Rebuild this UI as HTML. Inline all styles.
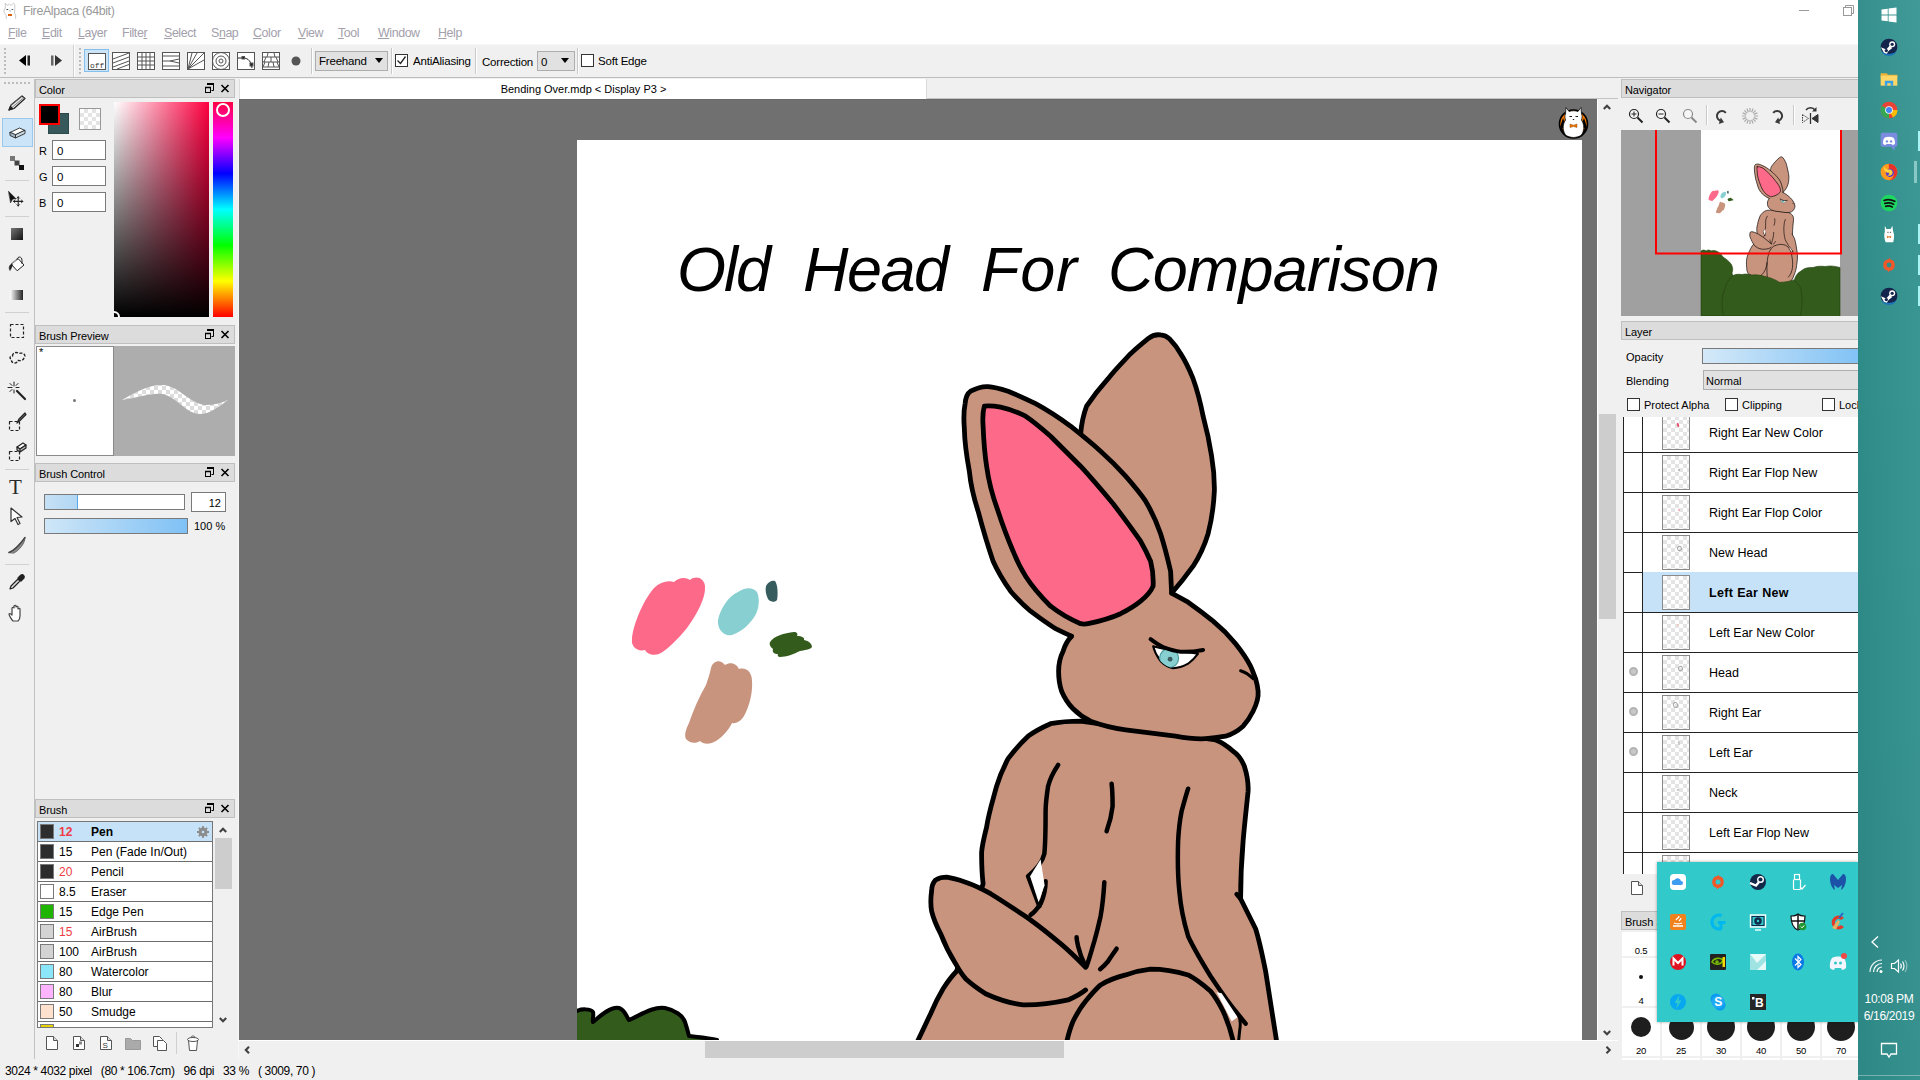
<!DOCTYPE html>
<html lang="en">
<head>
<meta charset="utf-8">
<title>FireAlpaca (64bit)</title>
<style>
*{box-sizing:border-box;margin:0;padding:0}
html,body{width:1920px;height:1080px;overflow:hidden;background:#f0f0f0;font-family:"Liberation Sans",sans-serif;font-size:12px;color:#000}
.a{position:absolute}
#app{position:absolute;left:0;top:0;width:1858px;height:1080px;background:#f0f0f0;overflow:hidden}
.ptitle{position:absolute;height:19px;background:#dcdcdc;border:1px solid #bfbfbf;font-size:11px;letter-spacing:-.1px;line-height:18px;padding-top:1px;padding-left:3px;white-space:nowrap;overflow:hidden}
.ptitle svg{position:absolute;top:0;right:0}
.inp{position:absolute;background:#fff;border:1px solid #7a7a7a;font-size:11.500px;line-height:21px;padding-left:4px;overflow:hidden}
.cb{position:absolute;width:13px;height:13px;background:#fff;border:1px solid #333}
.t{position:absolute;white-space:nowrap;line-height:14px}
.vsep{position:absolute;width:1px;background:#c9c9c9;border-right:1px solid #fff;box-sizing:content-box}
.checker{background-color:#fff;background-image:linear-gradient(45deg,#e4e4e4 25%,transparent 25%,transparent 75%,#e4e4e4 75%),linear-gradient(45deg,#e4e4e4 25%,transparent 25%,transparent 75%,#e4e4e4 75%);background-size:8px 8px;background-position:0 0,4px 4px}
</style>
</head>
<body>
<div id="app">
<!-- title bar + menu bar -->
<div class="a" style="left:0;top:0;width:1858px;height:44px;background:#fff"></div>
<svg class="a" style="left:0;top:0" width="20" height="21" viewBox="0 0 20 21"><path d="M6.400 18.800L6 14.800 4.100 12.600V9.400L5.200 8.800 5.300 3.100 7.200 5.500 9.400 4.200 11 5.500 13.500 3.100 14.800 4.700V8.800L14.500 13.200 15.700 14.800 15.600 18.800" fill="#fff" stroke="#c4c4c4" stroke-width=".9" stroke-linejoin="round"/><ellipse cx="7.300" cy="9.500" rx="1" ry=".6" fill="#333"/><ellipse cx="12.400" cy="9.500" rx="1" ry=".6" fill="#555"/><path d="M9.300 10.200l1.400 0-.5 2z" fill="#999"/><rect x="8" y="14" width="4" height="2" fill="#d9600f"/></svg>
<div class="t" style="left:23px;top:4px;font-size:12.400px;letter-spacing:-.35px;color:#9a9a9a">FireAlpaca (64bit)</div>
<div class="a" style="left:1799px;top:10px;width:10px;height:1px;background:#999"></div>
<svg class="a" style="left:1843px;top:4px" width="12" height="12" viewBox="0 0 12 12" fill="none" stroke="#999" stroke-width="1"><rect x=".5" y="3.5" width="8" height="8"/><path d="M2.5 3.5v-2h8v8h-2"/></svg>
<div id="menu" style="position:absolute;left:0;top:26px;height:16px;font-size:12.400px;letter-spacing:-.4px;color:#a3a0ab;line-height:14px">
<span class="t" style="left:8px"><u>F</u>ile</span>
<span class="t" style="left:42px"><u>E</u>dit</span>
<span class="t" style="left:78px"><u>L</u>ayer</span>
<span class="t" style="left:122px">Filte<u>r</u></span>
<span class="t" style="left:164px"><u>S</u>elect</span>
<span class="t" style="left:211px">S<u>n</u>ap</span>
<span class="t" style="left:253px"><u>C</u>olor</span>
<span class="t" style="left:298px"><u>V</u>iew</span>
<span class="t" style="left:338px"><u>T</u>ool</span>
<span class="t" style="left:378px"><u>W</u>indow</span>
<span class="t" style="left:438px"><u>H</u>elp</span>
</div>
<!-- toolbar -->
<div class="a" style="left:0;top:44px;width:1858px;height:34px;background:#f0f0f0;border-top:1px solid #f7f7f7;border-bottom:1px solid #bdbdbd"></div>
<div class="a" style="left:4px;top:48px;width:2px;height:26px;background:repeating-linear-gradient(#bcbcbc 0 2px,transparent 2px 4px)"></div>
<svg class="a" style="left:18px;top:54px" width="46" height="14" viewBox="0 0 46 14"><path d="M1 6.5L8 1v11z" fill="#000"/><rect x="9.5" y="1.5" width="2.5" height="10" fill="#222"/><rect x="33" y="1.5" width="2.5" height="10" fill="#666"/><path d="M44 6.5L37 1v11z" fill="#333"/></svg>
<div class="a" style="left:73px;top:45px;width:1px;height:32px;background:#d0d0d0"></div>
<div class="a" style="left:74px;top:45px;width:1px;height:32px;background:#fff"></div>
<div class="a" style="left:79px;top:48px;width:2px;height:26px;background:repeating-linear-gradient(#bcbcbc 0 2px,transparent 2px 4px)"></div>
<div class="a" style="left:84px;top:49px;width:25px;height:23px;background:#cce4f7;border:1px solid #84bfee"></div>
<svg class="a" style="left:84px;top:49px" width="220" height="24" viewBox="0 0 220 24" fill="none" stroke="#555" stroke-width="1">
<rect x="4.5" y="4.5" width="17" height="16" fill="#fff"/>
<text x="6" y="19" font-family="Liberation Mono, monospace" font-size="8" fill="#333" stroke="none">off</text>
<g><rect x="28.5" y="3.5" width="17" height="17" fill="#fff"/><path d="M29 10l16-6M29 14l16-6M29 18l16-6M33 20l12-4.500"/></g>
<g><rect x="53.500" y="3.500" width="17" height="17" fill="#fff"/><path d="M58 4v16M62 4v16M66 4v16M54 8h16M54 12h16M54 16h16"/></g>
<g><rect x="78.500" y="3.500" width="17" height="17" fill="#fff"/><path d="M79 7h16M79 12h7l9-2M86 12l9 2M79 17h16"/></g>
<g><rect x="103.500" y="3.500" width="17" height="17" fill="#fff"/><path d="M104 20L120 4M104 20l9-16M104 20l4-16M104 20l16-9"/></g>
<g><rect x="128.500" y="3.500" width="17" height="17" fill="#fff"/><circle cx="137" cy="12" r="2"/><circle cx="137" cy="12" r="5"/><circle cx="137" cy="12" r="8.500"/></g>
<g><rect x="153.500" y="3.500" width="17" height="17" fill="#fff"/><path d="M154 9h5c6 0 8 4 9 10" stroke="#222"/><rect x="158" y="7.500" width="2.500" height="2.500" fill="#222"/><rect x="166" y="14" width="3" height="3" fill="#222"/></g>
<g><rect x="178.500" y="3.500" width="17" height="17" fill="#fff"/><path d="M179 8h16M178 13h18M178 18h18M184 4l-1 4M190 4l1 4M182 8l-2 5M187 8v5M192 8l2 5M181 13l-2 5M185 13l-1 5M189 13l1 5M193 13l2 5"/></g>
<circle cx="212" cy="12" r="4.500" fill="#555" stroke="none"/>
</svg>
<div class="vsep" style="left:311px;top:48px;height:26px"></div>
<div class="a" style="left:315px;top:51px;width:73px;height:20px;background:#e1e1e1;border:1px solid #adadad"></div>
<div class="t" style="left:319px;top:54px;font-size:11.500px;letter-spacing:-.2px">Freehand</div>
<svg class="a" style="left:375px;top:58px" width="8" height="5"><path d="M0 0h8L4 5z" fill="#000"/></svg>
<div class="vsep" style="left:391px;top:48px;height:26px"></div>
<div class="cb" style="left:395px;top:54px"></div>
<svg class="a" style="left:396px;top:55px" width="11" height="11" viewBox="0 0 11 11"><path d="M1.500 5.500l3 3 5-7" fill="none" stroke="#222" stroke-width="1.300"/></svg>
<div class="t" style="left:413px;top:54px;font-size:11.5px;letter-spacing:-.2px">AntiAliasing</div>
<div class="vsep" style="left:475px;top:48px;height:26px"></div>
<div class="t" style="left:482px;top:55px;font-size:11.5px;letter-spacing:-.2px">Correction</div>
<div class="a" style="left:537px;top:51px;width:38px;height:20px;background:#e1e1e1;border:1px solid #adadad"></div>
<div class="t" style="left:541px;top:55px;font-size:11.500px">0</div>
<svg class="a" style="left:561px;top:58px" width="8" height="5"><path d="M0 0h8L4 5z" fill="#000"/></svg>
<div class="vsep" style="left:577px;top:48px;height:26px"></div>
<div class="cb" style="left:581px;top:54px"></div>
<div class="t" style="left:598px;top:54px;font-size:11.500px;letter-spacing:-.2px">Soft Edge</div>
<!-- left tool column -->
<div class="a" style="left:34px;top:79px;width:1px;height:980px;background:#c2c2c2"></div>
<div class="a" style="left:4px;top:82px;width:26px;height:2px;background:repeating-linear-gradient(90deg,#bcbcbc 0 2px,transparent 2px 4px)"></div>
<div class="a" style="left:2px;top:118px;width:31px;height:29px;background:#cce4f7;border:1px solid #99c9ef"></div>
<div class="a" style="left:5px;top:180px;width:24px;height:1px;background:#d0d0d0"></div>
<div class="a" style="left:5px;top:216px;width:24px;height:1px;background:#d0d0d0"></div>
<div class="a" style="left:5px;top:312px;width:24px;height:1px;background:#d0d0d0"></div>
<div class="a" style="left:5px;top:469px;width:24px;height:1px;background:#d0d0d0"></div>
<div class="a" style="left:5px;top:564px;width:24px;height:1px;background:#d0d0d0"></div>
<svg class="a" style="left:5px;top:91px" width="24" height="24" viewBox="0 0 24 24" fill="none" stroke="#222" stroke-width="1.200" stroke-linecap="round" stroke-linejoin="round"><path d="M4 19l2-5L17 5l3 2.500L9 17.500z" fill="#e8e8e8" stroke="#222"/><path d="M6 14l11-9M7.500 16l11-9" stroke="#666" stroke-width=".8"/><path d="M4 19l1.500-3.500 2.200 2.200z" fill="#222"/></svg>
<svg class="a" style="left:5px;top:121px" width="24" height="24" viewBox="0 0 24 24" fill="none" stroke="#222" stroke-width="1.200" stroke-linecap="round" stroke-linejoin="round"><g stroke="#2a2a2a" stroke-width=".9"><path d="M5 11.500l9.500-4.500 5.500 2.500-9.500 4.500z" fill="#fff"/><path d="M5 11.500v3l5.500 2.500v-3z" fill="#9fb4c4"/><path d="M10.500 14v3l9.500-4.500v-3z" fill="#c9d6e0"/></g></svg>
<svg class="a" style="left:5px;top:151px" width="24" height="24" viewBox="0 0 24 24" fill="none" stroke="#222" stroke-width="1.200" stroke-linecap="round" stroke-linejoin="round"><rect x="5" y="5" width="5" height="5" fill="#777" stroke="none"/><rect x="9.500" y="9.500" width="5" height="5" fill="#444" stroke="none"/><rect x="14" y="14" width="5" height="5" fill="#111" stroke="none"/></svg>
<svg class="a" style="left:5px;top:187px" width="24" height="24" viewBox="0 0 24 24" fill="none" stroke="#222" stroke-width="1.200" stroke-linecap="round" stroke-linejoin="round"><path d="M3.700 4.500l7.300 7.300-3.300.2-2 3.500z" fill="#111" stroke="#111" stroke-width=".6"/><path d="M13.200 9.800v9.200M8.600 14.400h9.200" stroke-width="1.100"/><path d="M11.900 11.200l1.300-1.400 1.300 1.400M11.900 17.600l1.300 1.400 1.300-1.400M10 13.100l-1.400 1.300 1.400 1.300M16.400 13.100l1.400 1.300-1.400 1.300" stroke-width=".9"/></svg>
<svg class="a" style="left:5px;top:222px" width="24" height="24" viewBox="0 0 24 24" fill="none" stroke="#222" stroke-width="1.200" stroke-linecap="round" stroke-linejoin="round"><defs><linearGradient id="g1" x1="0" y1="0" x2="1" y2="1"><stop offset="0" stop-color="#777"/><stop offset="1" stop-color="#111"/></linearGradient></defs><rect x="6" y="6" width="12" height="12" fill="url(#g1)" stroke="none"/></svg>
<svg class="a" style="left:5px;top:252px" width="24" height="24" viewBox="0 0 24 24" fill="none" stroke="#222" stroke-width="1.200" stroke-linecap="round" stroke-linejoin="round"><path d="M6.500 12l6.500-5.500 6 6.500-6.500 5.500z" fill="#fff" stroke-width="1"/><path d="M7 11.500l6-5" stroke="#999" stroke-width="1.600"/><path d="M6.500 12c-2.500 1.500-3 4.500-1.500 6.500 1-1.500 1.500-3 2.500-5.500z" fill="#222" stroke-width=".6"/><path d="M12 7.500c.5-3.500 5-3.500 5 1v3" stroke-width="1"/></svg>
<svg class="a" style="left:5px;top:283px" width="24" height="24" viewBox="0 0 24 24" fill="none" stroke="#222" stroke-width="1.200" stroke-linecap="round" stroke-linejoin="round"><defs><linearGradient id="g2" x1="0" y1="0" x2="1" y2="0"><stop offset="0" stop-color="#fff"/><stop offset="1" stop-color="#222"/></linearGradient></defs><rect x="5" y="7" width="13" height="10" fill="url(#g2)" stroke="none"/></svg>
<svg class="a" style="left:5px;top:319px" width="24" height="24" viewBox="0 0 24 24" fill="none" stroke="#222" stroke-width="1.200" stroke-linecap="round" stroke-linejoin="round"><rect x="5.500" y="5.500" width="13" height="13" stroke-dasharray="3 2" stroke-linecap="butt"/></svg>
<svg class="a" style="left:5px;top:348px" width="24" height="24" viewBox="0 0 24 24" fill="none" stroke="#222" stroke-width="1.200" stroke-linecap="round" stroke-linejoin="round"><path d="M7.500 8c0-3.500 4-4.500 6.500-2.500 4.500-1.500 7.500 2 5 4.500-1 3.500-5 2.500-6.500 2.500-.500 4-7 3-6-1-2.500-1.500-1.500-3.500 1-3.500z" stroke-dasharray="3 1.500" stroke-linecap="butt" stroke-width="1.400"/></svg>
<svg class="a" style="left:5px;top:379px" width="24" height="24" viewBox="0 0 24 24" fill="none" stroke="#222" stroke-width="1.200" stroke-linecap="round" stroke-linejoin="round"><path d="M12 12l8 8" stroke-width="2.200"/><path d="M9 3v4M9 11v3M3 8.500h4M11 8.500h3M5 4.500l2 2M13 4.500l-2 2M5 12.500l2-2" stroke-width="1"/></svg>
<svg class="a" style="left:5px;top:410px" width="24" height="24" viewBox="0 0 24 24" fill="none" stroke="#222" stroke-width="1.200" stroke-linecap="round" stroke-linejoin="round"><rect x="4.500" y="11.500" width="10" height="9" stroke-dasharray="3 2" stroke-linecap="butt"/><path d="M12 13l2-4 6-6 1 1.500-6 6z" fill="#888"/></svg>
<svg class="a" style="left:5px;top:440px" width="24" height="24" viewBox="0 0 24 24" fill="none" stroke="#222" stroke-width="1.200" stroke-linecap="round" stroke-linejoin="round"><rect x="4.500" y="11.500" width="10" height="9" stroke-dasharray="3 2" stroke-linecap="butt"/><path d="M12 7l6-4 3 2-6 4z" fill="#fff"/><path d="M12 7v3l3 2v-3zM15 9v3l6-4V5z" fill="#bbb"/></svg>
<div class="t" style="left:9px;top:476px;font-family:'Liberation Serif',serif;font-size:21px;line-height:22px;color:#2a2a2a">T</div>
<svg class="a" style="left:5px;top:504px" width="24" height="24" viewBox="0 0 24 24" fill="none" stroke="#222" stroke-width="1.200" stroke-linecap="round" stroke-linejoin="round"><path d="M6 4l11 9-5 .500 3 6-2 1-3-6-4 3z" fill="#fff" stroke="#333"/></svg>
<svg class="a" style="left:5px;top:533px" width="24" height="24" viewBox="0 0 24 24" fill="none" stroke="#222" stroke-width="1.200" stroke-linecap="round" stroke-linejoin="round"><path d="M4 19.500c5-2 11-8 16-15 0 6-6 13-11 15.500z" fill="#8a8a8a" stroke="#555" stroke-width=".8"/><path d="M4 19.500c5-2 11-8 16-15" stroke="#444" stroke-width="1.400"/></svg>
<svg class="a" style="left:5px;top:570px" width="24" height="24" viewBox="0 0 24 24" fill="none" stroke="#222" stroke-width="1.200" stroke-linecap="round" stroke-linejoin="round"><path d="M5 19l1-3 7-7 2 2-7 7z" fill="#ddd"/><path d="M13 8l3 3 3-3c1-2-1-4-3-3z" fill="#222"/></svg>
<svg class="a" style="left:5px;top:601px" width="24" height="24" viewBox="0 0 24 24" fill="none" stroke="#222" stroke-width="1.200" stroke-linecap="round" stroke-linejoin="round"><path d="M8 20c-2-2-4-6-4-7 1-1 2 0 3 1V7c1-1 2-1 2 0v-2c1-1 2-1 2 0v1c1-1 2-1 2 0v2c1-1 2-1 2 0v7c0 3-1 4-2 5z" fill="#fff" stroke="#444"/></svg>
<!-- color panel -->
<div class="ptitle" style="left:35px;top:79px;width:200px">Color<svg width="30" height="17" viewBox="0 0 30 17" fill="none" stroke="#000"><path d="M3.500 4.500h6v6h-2" stroke-width="1"/><path d="M3 4h7" stroke-width="2"/><rect x="1.500" y="7.500" width="5" height="5" fill="#dcdcdc"/><path d="M1 7.500h6" stroke-width="1.500"/><path d="M17.500 5l7 7M24.500 5l-7 7" stroke-width="1.600"/></svg></div>
<div class="a" style="left:48px;top:113px;width:21px;height:21px;background:#37595c;border:1px solid #2c4a4d"></div>
<div class="a" style="left:39px;top:104px;width:21px;height:21px;background:#000;border:2px solid #f00"></div>
<div class="a checker" style="left:79px;top:108px;width:22px;height:22px;border:1px solid #999"></div>
<div class="t" style="left:39px;top:144px;font-size:11px">R</div>
<div class="inp" style="left:52px;top:140px;width:54px;height:20px">0</div>
<div class="t" style="left:39px;top:170px;font-size:11px">G</div>
<div class="inp" style="left:52px;top:166px;width:54px;height:20px">0</div>
<div class="t" style="left:39px;top:196px;font-size:11px">B</div>
<div class="inp" style="left:52px;top:192px;width:54px;height:20px">0</div>
<div class="a" style="left:114px;top:102px;width:95px;height:215px;background:linear-gradient(to top,#000,rgba(0,0,0,0)),linear-gradient(to right,#fff,#ff0040);overflow:hidden"><div class="a" style="left:-6px;top:209px;width:12px;height:12px;border:2px solid #fff;border-radius:50%"></div></div>
<div class="a" style="left:213px;top:102px;width:20px;height:215px;background:linear-gradient(to bottom,#ff0040 0%,#ff00ff 16.600%,#0000ff 33.300%,#00ffff 50%,#00ff00 66.600%,#ffff00 83.300%,#ff0000 100%)"></div>
<div class="a" style="left:216px;top:103px;width:14px;height:14px;border:2px solid #fff;border-radius:50%"></div>
<!-- brush preview -->
<div class="ptitle" style="left:35px;top:325px;width:200px">Brush Preview<svg width="30" height="17" viewBox="0 0 30 17" fill="none" stroke="#000"><path d="M3.500 4.500h6v6h-2" stroke-width="1"/><path d="M3 4h7" stroke-width="2"/><rect x="1.500" y="7.500" width="5" height="5" fill="#dcdcdc"/><path d="M1 7.500h6" stroke-width="1.500"/><path d="M17.500 5l7 7M24.500 5l-7 7" stroke-width="1.600"/></svg></div>
<div class="a" style="left:36px;top:346px;width:78px;height:110px;background:#fff;border:1px solid #8a8a8a"></div>
<div class="t" style="left:39px;top:345px;font-size:11px">*</div>
<div class="a" style="left:73px;top:399px;width:3px;height:3px;border-radius:50%;background:#777"></div>
<div class="a" style="left:114px;top:346px;width:121px;height:110px;background:#adadad"></div>
<svg class="a" style="left:114px;top:346px" width="121" height="110" viewBox="0 0 121 110"><defs><pattern id="ck" width="8" height="8" patternUnits="userSpaceOnUse"><rect width="8" height="8" fill="#fff"/><rect width="4" height="4" fill="#ddd"/><rect x="4" y="4" width="4" height="4" fill="#ddd"/></pattern></defs><path d="M8 54C25 44 38 38 50 39c16 2 26 19 42 20 8 0 15-2 22-5-8 6-18 14-28 14-14 0-24-18-38-20-12-1-26 4-40 6z" fill="url(#ck)"/></svg>
<!-- brush control -->
<div class="ptitle" style="left:35px;top:463px;width:200px">Brush Control<svg width="30" height="17" viewBox="0 0 30 17" fill="none" stroke="#000"><path d="M3.500 4.500h6v6h-2" stroke-width="1"/><path d="M3 4h7" stroke-width="2"/><rect x="1.500" y="7.500" width="5" height="5" fill="#dcdcdc"/><path d="M1 7.500h6" stroke-width="1.500"/><path d="M17.500 5l7 7M24.500 5l-7 7" stroke-width="1.600"/></svg></div>
<div class="a" style="left:44px;top:494px;width:141px;height:16px;background:#fff;border:1px solid #7a7a7a"><div style="width:33px;height:14px;background:linear-gradient(90deg,#c5e0f5,#b2d7f3);border-right:1px solid #5aa7e6"></div></div>
<div class="inp" style="left:191px;top:492px;width:35px;height:20px;text-align:right;padding-right:4px;line-height:20px;font-size:11px">12</div>
<div class="a" style="left:44px;top:518px;width:144px;height:16px;background:linear-gradient(90deg,#cfe6f7,#7fc1f5);border:1px solid #7a7a7a"></div>
<div class="t" style="left:194px;top:519px;font-size:11px">100 %</div>
<!-- brush list -->
<div class="ptitle" style="left:35px;top:799px;width:200px">Brush<svg width="30" height="17" viewBox="0 0 30 17" fill="none" stroke="#000"><path d="M3.500 4.500h6v6h-2" stroke-width="1"/><path d="M3 4h7" stroke-width="2"/><rect x="1.500" y="7.500" width="5" height="5" fill="#dcdcdc"/><path d="M1 7.500h6" stroke-width="1.500"/><path d="M17.500 5l7 7M24.500 5l-7 7" stroke-width="1.600"/></svg></div>
<div class="a" style="left:37px;top:821px;width:176px;height:207px;background:#fff;border:1px solid #777;overflow:hidden">
<div class="a" style="left:0;top:0px;width:174px;height:20px;background:#c5e2f8;border-bottom:1px solid #6e6e6e;font-size:12px;font-weight:bold;"><div class="a" style="left:2px;top:2px;width:14px;height:15px;background:#2d2d2d;border:1px solid #7a7a7a"></div><div class="t" style="left:21px;top:3px;color:#f03c46">12</div><div class="t" style="left:53px;top:3px">Pen</div></div>
<div class="a" style="left:0;top:20px;width:174px;height:20px;background:#fff;border-bottom:1px solid #6e6e6e;font-size:12px;"><div class="a" style="left:2px;top:2px;width:14px;height:15px;background:#2d2d2d;border:1px solid #7a7a7a"></div><div class="t" style="left:21px;top:3px;color:#000">15</div><div class="t" style="left:53px;top:3px">Pen (Fade In/Out)</div></div>
<div class="a" style="left:0;top:40px;width:174px;height:20px;background:#fff;border-bottom:1px solid #6e6e6e;font-size:12px;"><div class="a" style="left:2px;top:2px;width:14px;height:15px;background:#2d2d2d;border:1px solid #7a7a7a"></div><div class="t" style="left:21px;top:3px;color:#f03c46">20</div><div class="t" style="left:53px;top:3px">Pencil</div></div>
<div class="a" style="left:0;top:60px;width:174px;height:20px;background:#fff;border-bottom:1px solid #6e6e6e;font-size:12px;"><div class="a" style="left:2px;top:2px;width:14px;height:15px;background:#fff;border:1px solid #7a7a7a"></div><div class="t" style="left:21px;top:3px;color:#000">8.5</div><div class="t" style="left:53px;top:3px">Eraser</div></div>
<div class="a" style="left:0;top:80px;width:174px;height:20px;background:#fff;border-bottom:1px solid #6e6e6e;font-size:12px;"><div class="a" style="left:2px;top:2px;width:14px;height:15px;background:#1fb400;border:1px solid #7a7a7a"></div><div class="t" style="left:21px;top:3px;color:#000">15</div><div class="t" style="left:53px;top:3px">Edge Pen</div></div>
<div class="a" style="left:0;top:100px;width:174px;height:20px;background:#fff;border-bottom:1px solid #6e6e6e;font-size:12px;"><div class="a" style="left:2px;top:2px;width:14px;height:15px;background:#d3d3d3;border:1px solid #7a7a7a"></div><div class="t" style="left:21px;top:3px;color:#f03c46">15</div><div class="t" style="left:53px;top:3px">AirBrush</div></div>
<div class="a" style="left:0;top:120px;width:174px;height:20px;background:#fff;border-bottom:1px solid #6e6e6e;font-size:12px;"><div class="a" style="left:2px;top:2px;width:14px;height:15px;background:#d3d3d3;border:1px solid #7a7a7a"></div><div class="t" style="left:21px;top:3px;color:#000">100</div><div class="t" style="left:53px;top:3px">AirBrush</div></div>
<div class="a" style="left:0;top:140px;width:174px;height:20px;background:#fff;border-bottom:1px solid #6e6e6e;font-size:12px;"><div class="a" style="left:2px;top:2px;width:14px;height:15px;background:#8ce6fa;border:1px solid #7a7a7a"></div><div class="t" style="left:21px;top:3px;color:#000">80</div><div class="t" style="left:53px;top:3px">Watercolor</div></div>
<div class="a" style="left:0;top:160px;width:174px;height:20px;background:#fff;border-bottom:1px solid #6e6e6e;font-size:12px;"><div class="a" style="left:2px;top:2px;width:14px;height:15px;background:#ffb4ff;border:1px solid #7a7a7a"></div><div class="t" style="left:21px;top:3px;color:#000">80</div><div class="t" style="left:53px;top:3px">Blur</div></div>
<div class="a" style="left:0;top:180px;width:174px;height:20px;background:#fff;border-bottom:1px solid #6e6e6e;font-size:12px;"><div class="a" style="left:2px;top:2px;width:14px;height:15px;background:#ffe1cd;border:1px solid #7a7a7a"></div><div class="t" style="left:21px;top:3px;color:#000">50</div><div class="t" style="left:53px;top:3px">Smudge</div></div>
<div class="a" style="left:0;top:200px;width:174px;height:20px;background:#fff;border-bottom:1px solid #6e6e6e;font-size:12px;"><div class="a" style="left:2px;top:2px;width:14px;height:15px;background:#e6d200;border:1px solid #7a7a7a"></div><div class="t" style="left:21px;top:3px;color:#000">50</div><div class="t" style="left:53px;top:3px">FingerTip</div></div>
<svg class="a" style="left:158px;top:3px" width="14" height="14" viewBox="0 0 14 14"><circle cx="7" cy="7" r="3.200" fill="none" stroke="#8c8c8c" stroke-width="2.400"/><path d="M7 1v12M1 7h12M2.800 2.800l8.400 8.400M11.200 2.800l-8.400 8.400" stroke="#8c8c8c" stroke-width="1.800"/><circle cx="7" cy="7" r="1.300" fill="#c5e2f8"/></svg>
</div>
<div class="a" style="left:214px;top:821px;width:18px;height:207px;background:#f0f0f0"></div>
<div class="a" style="left:215px;top:838px;width:17px;height:51px;background:#cdcdcd"></div>
<svg class="a" style="left:217px;top:826px" width="12" height="8" viewBox="0 0 12 8"><path d="M2.800 6L6 2.800 9.200 6" fill="none" stroke="#404040" stroke-width="2.100"/></svg>
<svg class="a" style="left:217px;top:1016px" width="12" height="8" viewBox="0 0 12 8"><path d="M2.800 2L6 5.200 9.200 2" fill="none" stroke="#404040" stroke-width="2.100"/></svg>
<svg class="a" style="left:43px;top:1034px" width="18" height="18" viewBox="0 0 18 18" fill="#fff" stroke="#555" stroke-width="1"><path d="M3.500 2.500h7l4 4v9h-11z"/><path d="M10.500 2.500v4h4" fill="#ddd"/></svg>
<svg class="a" style="left:70px;top:1034px" width="18" height="18" viewBox="0 0 18 18" fill="#fff" stroke="#555" stroke-width="1"><path d="M3.500 2.500h7l4 4v9h-11z"/><path d="M10.500 2.500v4h4" fill="#ddd"/><rect x="6" y="10" width="3" height="3" fill="#333" stroke="none"/><rect x="9" y="7.500" width="3" height="3" fill="#888" stroke="none"/></svg>
<svg class="a" style="left:97px;top:1034px" width="18" height="18" viewBox="0 0 18 18" fill="#fff" stroke="#555" stroke-width="1"><path d="M3.500 2.500h7l4 4v9h-11z"/><path d="M10.500 2.500v4h4" fill="#ddd"/><text x="5.500" y="14" font-size="8" font-family="Liberation Sans, sans-serif" fill="#333" stroke="none">S</text></svg>
<svg class="a" style="left:124px;top:1034px" width="18" height="18" viewBox="0 0 18 18" fill="#fff" stroke="#555" stroke-width="1"><path d="M1.500 4.500h5l2 2h8v9h-15z" fill="#aaa" stroke="#999"/></svg>
<svg class="a" style="left:151px;top:1034px" width="18" height="18" viewBox="0 0 18 18" fill="#fff" stroke="#555" stroke-width="1"><path d="M2.500 2.500h6l3 3v7h-9z"/><path d="M6.500 6.500h6l3 3v7h-9z"/></svg>
<div class="a" style="left:176px;top:1032px;width:1px;height:22px;background:#d0d0d0"></div>
<svg class="a" style="left:184px;top:1034px" width="18" height="18" viewBox="0 0 18 18" fill="#fff" stroke="#555" stroke-width="1"><path d="M4.500 6.500h9l-1 10h-7z"/><ellipse cx="9" cy="5.500" rx="5.500" ry="2" /><path d="M7 3.500c0-2 4-2 4 0" fill="none"/></svg>
<!-- status bar -->
<div class="t" style="left:5px;top:1064px;font-size:12px;letter-spacing:-.35px;word-spacing:0">3024 * 4032 pixel&nbsp;&nbsp; (80 * 106.7cm)&nbsp;&nbsp; 96 dpi&nbsp;&nbsp; 33 %&nbsp;&nbsp; ( 3009, 70 )</div>
<!-- document tab -->
<div class="a" style="left:238px;top:99px;width:1px;height:960px;background:#f8f8f8"></div>
<div class="a" style="left:239px;top:79px;width:1px;height:20px;background:#dcdcdc"></div>
<div class="a" style="left:240px;top:79px;width:687px;height:20px;background:#fff;border-right:1px solid #d9d9d9"></div>
<div class="t" style="left:240px;top:82px;width:687px;text-align:center;font-size:11px">Bending Over.mdp &lt; Display P3 &gt;</div>
<div class="a" style="left:927px;top:98px;width:691px;height:1px;background:#c4c4c4"></div>
<!-- canvas viewport -->
<div class="a" style="left:239px;top:99px;width:1358px;height:941px;background:#707070;border-top:1px solid #686868;overflow:hidden">
<svg class="a" style="left:0;top:-1px" width="1358" height="941" viewBox="239 99 1358 941">
<rect x="577" y="140" width="1005" height="901" fill="#fff"/>
<g font-family="Liberation Sans, sans-serif" font-style="italic" font-size="63" fill="#000">
<text x="677" y="291" textLength="94" lengthAdjust="spacing">Old</text>
<text x="803" y="291" textLength="146" lengthAdjust="spacing">Head</text>
<text x="981" y="291" textLength="96" lengthAdjust="spacing">For</text>
<text x="1108" y="291" textLength="332" lengthAdjust="spacing">Comparison</text>
</g>
<!-- colour swatches -->
<g id="sw">
<path d="M632 640c0-12 10-38 22-52 6-6 14-8 20-6 5-5 12-5 16-2 6-5 14-2 15 6 1 12-8 28-18 42-8 10-20 22-28 26-6 2-12 0-14-4-8 2-14-4-13-10z" fill="#fd6a89"/>
<path d="M718 620c2-10 10-24 20-28 6-4 14-6 19 0 3 6 2 16-1 22-4 8-14 18-24 21-8 2-15-6-14-15z" fill="#87cfd0"/>
<path d="M766 586c2-4 6-6 9-5 3 4 3 14 2 19-2 3-7 2-9-1-2-4-3-9-2-13z" fill="#365c5e"/>
<path d="M770 642c4-6 14-9 24-10 3 0 4 2 3 4 5 0 8 2 7 4 5 1 8 4 8 7-2 3-8 3-12 4-6 3-14 6-20 6-2 0-3-2-2-3-4 0-6-2-5-5-3-2-4-5-3-7z" fill="#335b1c"/>
<path d="M711 668c2-8 10-9 14-3 6-4 12-1 14 4 8-2 13 4 13 12 1 12-3 26-8 35-3 5-8 8-12 7-4 8-10 14-16 18-5 3-12 4-16 0-4 3-11 2-14-2-2-4 0-10 3-16 4-12 10-26 17-38 2-6 4-12 5-17z" fill="#c9947e"/>
</g>
<!-- bush -->
<clipPath id="cv"><rect x="577" y="140" width="1005" height="901"/></clipPath>
<path clip-path="url(#cv)" d="M575 1012c6-4 16-3 18 0 1 4-1 8 0 10 7-6 18-16 26-14 6 2 7 8 10 12 10-4 24-14 36-12 10 2 18 8 20 14 2 6 3 10 4 14 8 1 20 2 28 4l-2 4H575z" fill="#335b1c" stroke="#000" stroke-width="4" stroke-linejoin="round"/>
<!-- rabbit -->
<g id="rabbit" transform="translate(.6 1.200)" stroke-linejoin="round" stroke-linecap="round">
<!-- back ear -->
<path id="bear" d="M1080 433C1081 421 1083 413 1086 405C1092 396 1099 387 1107.500 377.500C1114 369 1122 361 1130 352.500C1136 347 1142 342 1147.500 337.500C1152 334 1156 333 1160 333.750C1163 334 1166 335 1168.750 337.500C1173 342 1177 347 1180 352.500C1185 360 1189 369 1192.500 377.500C1197 390 1200 402 1202.500 415C1206 428 1209 442 1211 455C1213 467 1214 478 1213.750 490C1213 505 1211 519 1207.500 532.500C1204 544 1199 555 1192.500 565C1186 574 1179 583 1171 592" fill="#c9947e" stroke="#000" stroke-width="4.800"/>
<!-- body fill+stroke -->
<path d="M1080 720C1066 720 1058 721 1050 722.500C1042 726 1034 730 1027.500 735C1020 742 1013 750 1007.500 757.500C1003 766 999 775 996 785C992 800 988 812 986 826C983 838 981 846 981 852.500C981 864 981.500 874 982.500 882.500L956 970C950 976 946 982 942.500 987.500C938 995 934 1003 930 1012.500L917 1040C910 1060 906 1080 906 1094C905 1120 908 1140 910 1160C920 1190 940 1215 958 1231C1040 1260 1140 1262 1215 1248C1232 1232 1244 1214 1249 1197C1260 1170 1268 1145 1270 1120C1274 1095 1277 1070 1276 1040L1265 970C1262 955 1259 940 1255 927.500L1240 897.500C1240 878 1241 858 1242.500 840C1244 822 1246 805 1247.500 790C1248 780 1246 772 1243.750 765C1241 758 1237 753 1232.500 750C1227 745 1221 741 1215 738.750Z" fill="#c9947e" stroke="#000" stroke-width="4.800"/>
<!-- head fill -->
<path d="M1071 635C1066 640 1064 645 1062.500 650C1059 657 1058 663 1058 670C1058 678 1059 684 1061 690C1064 697 1068 703 1072.500 707.500C1078 713 1084 717 1090 720C1101 724 1113 727 1125 728.750L1175 735C1186 737 1196 738 1205 737.500C1212 737 1219 736 1225 735C1232 733 1238 729 1242.500 725C1247 720 1250 715 1252.500 710C1256 703 1258 696 1257.500 690C1257 685 1256 681 1255 677.500C1253 673 1252 669 1250 665C1246 657 1241 650 1235 642.500C1228 634 1221 627 1212.500 620C1204 613 1196 607 1187.500 601L1171 592L1120 580Z" fill="#c9947e"/>
<!-- front ear fill -->
<path id="fearf" d="M1071 635C1066 633 1060 630 1055 627.500C1046 622 1038 616 1030 610C1023 604 1016 597 1010 590C1003 580 997 570 992.500 560C987 544 982 527 977.500 510C973 496 970 483 968.750 470C966 455 964 441 963.750 427.500C963 418 963 410 964.500 402.500C965 396 967 392 970 390C976 387 982 385 987.500 385.500C994 386 1001 388 1007.500 390C1017 394 1026 398 1035 402.500C1047 409 1059 417 1070 425C1080 433 1090 441 1100 450C1109 458 1117 466 1125 475C1132 483 1139 491 1145 500C1151 510 1156 521 1160 532.500C1164 545 1167 557 1170 570L1171 592L1130 660Z" fill="#c9947e"/>
<!-- head stroke (open) -->
<path d="M1071 635C1066 640 1064 645 1062.500 650C1059 657 1058 663 1058 670C1058 678 1059 684 1061 690C1064 697 1068 703 1072.500 707.500C1078 713 1084 717 1090 720C1101 724 1113 727 1125 728.750L1175 735C1186 737 1196 738 1205 737.500C1212 737 1219 736 1225 735C1232 733 1238 729 1242.500 725C1247 720 1250 715 1252.500 710C1256 703 1258 696 1257.500 690C1257 685 1256 681 1255 677.500C1253 673 1252 669 1250 665C1246 657 1241 650 1235 642.500C1228 634 1221 627 1212.500 620C1204 613 1196 607 1187.500 601L1171 592" fill="none" stroke="#000" stroke-width="4.800"/>
<!-- front ear stroke (open) -->
<path d="M1071 635C1066 633 1060 630 1055 627.500C1046 622 1038 616 1030 610C1023 604 1016 597 1010 590C1003 580 997 570 992.500 560C987 544 982 527 977.500 510C973 496 970 483 968.750 470C966 455 964 441 963.750 427.500C963 418 963 410 964.500 402.500C965 396 967 392 970 390C976 387 982 385 987.500 385.500C994 386 1001 388 1007.500 390C1017 394 1026 398 1035 402.500C1047 409 1059 417 1070 425C1080 433 1090 441 1100 450C1109 458 1117 466 1125 475C1132 483 1139 491 1145 500C1151 510 1156 521 1160 532.500C1164 545 1167 557 1170 570L1171 592" fill="none" stroke="#000" stroke-width="4.800"/>
<!-- inner ear -->
<path d="M983.750 405C989 404 995 405 1000 406C1009 408 1017 411 1025 415C1034 421 1042 428 1050 435C1060 445 1070 455 1080 465C1091 477 1102 490 1112.500 502.500C1122 515 1131 527 1140 540C1144 547 1147 553 1150 560C1152 568 1153 576 1152.500 585C1150 591 1145 596 1140 600C1134 605 1127 609 1120 612.500C1110 617 1099 620 1087.500 622.500C1085 623 1082 623 1080 622.500C1069 618 1059 612 1050 605C1041 596 1032 586 1025 575C1020 567 1016 559 1012.500 550C1007 537 1002 524 997.500 510C992 495 988 480 986 465C984 452 983 438 982.500 425C982 418 982 411 983.750 405Z" fill="#fd6a89" stroke="#000" stroke-width="4.800"/>
<g fill="#c9947e" stroke="#000" stroke-width="4.800">
<!-- eye -->
<path d="M1152.500 645C1154 651 1157 656 1160 660C1164 664 1168 666 1172.500 667C1178 667 1183 665 1187.500 662.500C1191 660 1195 656 1197.500 652.500C1188 651 1170 650 1152.500 645Z" fill="#fff" stroke-width="2"/>
<clipPath id="eyec"><path d="M1152.500 645C1154 651 1157 656 1160 660C1164 664 1168 666 1172.500 667C1178 667 1183 665 1187.500 662.500C1191 660 1195 656 1197.500 652.500C1188 651 1170 650 1152.500 645Z"/></clipPath><circle cx="1168.500" cy="657" r="9.500" fill="#87cfd0" stroke="#4a9a9e" stroke-width="1.200" clip-path="url(#eyec)"/>
<circle cx="1169.500" cy="658" r="2.400" fill="#3a5a5e" stroke="none"/>
<path d="M1150 638C1154 641 1158 644 1162.500 646C1168 648 1174 650 1180 650.500C1188 651 1196 650 1202.500 648.750" fill="none" stroke-width="4"/>
<path d="M1240 669.500C1245 671 1249 674 1252.500 677.500" fill="none" stroke-width="3"/>
<!-- back lines -->
<g fill="none" stroke-width="4.500">
<path d="M1057.500 763.750C1052 772 1049 779 1047.500 785C1046 795 1045 803 1045 810C1045 825 1045 840 1043.750 852.500C1042 860 1036 868 1027.500 875L1035 895L1038.750 905"/>
<path d="M1045 880C1045 888 1043 896 1040 902.500C1037 907 1034 911 1030 913.750"/>
<path d="M1111 782.500C1112 790 1112 798 1112 805C1111 814 1109 822 1106 830"/>
<path d="M1103.750 881C1103 893 1102 904 1100 915C1098 924 1096 932 1093.750 940C1091 949 1089 957 1086 965"/>
<path d="M1076 936C1076 939 1077 942 1077.500 945C1079 951 1081 957 1083.750 962.500"/>
<path d="M1116 947.500C1113 952 1110 956 1107.500 960C1105 963 1102 966 1099.500 968"/>
<path d="M1187.500 787.500C1185 795 1183 803 1181 810C1179 820 1178 830 1177.500 840C1177 857 1177 874 1178.750 890C1180 905 1183 920 1187.500 935C1194 949 1202 962 1210 975C1218 987 1226 999 1235 1010L1245 1022.500"/>
<path d="M1240 897.500L1236 893"/>
</g>
<!-- arm gap -->
<path d="M1040 858L1029.500 875L1038 901L1044 884Z" fill="#fff" stroke="none"/>
<!-- buttock -->
<path d="M1060 1250C1056 1200 1052 1150 1056 1100C1058 1075 1061 1058 1065 1046C1067 1036 1069 1028 1072.500 1020C1076 1013 1080 1006 1085 1000C1090 994 1095 988 1100 983.750C1108 979 1116 976 1125 973.750C1133 971 1141 969 1150 968C1163 968 1175 970 1187.500 973.750C1196 978 1203 984 1210 990C1215 996 1219 1003 1222.500 1010C1227 1020 1231 1030 1233.750 1046C1240 1075 1243 1105 1240 1135C1236 1165 1226 1190 1210 1205" fill="none"/>
<path d="M1056 1100C1050 1150 1030 1185 1000 1200C975 1208 950 1200 930 1185" fill="none"/>
<path d="M1216 991L1221 992L1237 1016L1231 1020Z" fill="#fff" stroke="none"/>
<path d="M1238 1014C1240 1018 1240 1024 1239 1030L1238 1040" fill="none" stroke-width="3"/>
<!-- tail -->
<path d="M1085 966C1077 958 1069 950 1060 942.500C1050 934 1040 926 1030 918.750C1017 910 1004 901 990 892.500C982 888 974 884 965 881C959 879 953 877 946 876C942 876 938 877 935 878.750C932 882 931 886 931 890C930 897 930 904 931 910C933 918 936 925 940 932.500C944 943 949 953 955 962.500C958 968 961 973 965 977.500C971 983 978 988 985 992.500C997 998 1009 1002 1022.500 1003.750C1038 1004 1053 1002 1067.500 998.750C1074 996 1080 993 1085 988.750" />
</g>
</g>
</svg>
<!-- logo -->
<svg class="a" style="left:1318px;top:5px" width="34" height="36" viewBox="0 0 34 36"><circle cx="16.500" cy="19" r="14" fill="#f07800" stroke="#000" stroke-width="1.600"/><path d="M3 22l3-9 1.500 4 2-8 1.500 5v18c-4-2-7-6-8-10zM30 22l-3-9-1.500 4-2-8-1.500 5v18c4-2 7-6 8-10z" fill="#000"/><path d="M5.500 24l2-6 1 3 1.500-6v14zM27.500 24l-2-6-1 3-1.500-6v14z" fill="#f07800"/><path d="M9 2.500l3 4c3-1 6-1 9 0l3-4 .5 6.500c1 2 .5 4 0 6 2 3 3 7 1.500 12-1 3-3 5-9.500 5.500-6.500-.500-8.500-2.500-9.500-5.500-1.500-5-.500-9 1.500-12-.500-2-1-4 0-6z" fill="#fff" stroke="#000" stroke-width=".7"/><path d="M12.500 11.500h2.500M18.500 11.500h2.500" stroke="#000" stroke-width=".9"/><path d="M15.500 14h2l-1 1.200z" fill="#000"/><path d="M13 19l3.500 1.200L20 19v3.600l-3.500-1.200L13 22.600z" fill="#f07800" stroke="#7a3a00" stroke-width=".4"/></svg>
</div>
<!-- canvas scrollbars -->
<div class="a" style="left:1597px;top:99px;width:21px;height:941px;background:#f0f0f0;border-left:1px solid #fff"></div>
<div class="a" style="left:1599px;top:414px;width:17px;height:205px;background:#cdcdcd"></div>
<svg class="a" style="left:1601px;top:103px" width="12" height="8" viewBox="0 0 12 8"><path d="M2.800 6L6 2.800 9.200 6" fill="none" stroke="#404040" stroke-width="2.100"/></svg>
<svg class="a" style="left:1601px;top:1029px" width="12" height="8" viewBox="0 0 12 8"><path d="M2.800 2L6 5.200 9.200 2" fill="none" stroke="#404040" stroke-width="2.100"/></svg>
<div class="a" style="left:239px;top:1040px;width:1379px;height:19px;background:#f0f0f0;border-top:1px solid #fff"></div>
<div class="a" style="left:705px;top:1041px;width:359px;height:17px;background:#cdcdcd"></div>
<svg class="a" style="left:243px;top:1044px" width="8" height="12" viewBox="0 0 8 12"><path d="M6 2.800L2.800 6 6 9.200" fill="none" stroke="#404040" stroke-width="2.100"/></svg>
<svg class="a" style="left:1604px;top:1044px" width="8" height="12" viewBox="0 0 8 12"><path d="M2.500 2.800L5.700 6 2.500 9.200" fill="none" stroke="#404040" stroke-width="2.100"/></svg>
<!-- navigator -->
<div class="ptitle" style="left:1621px;top:79px;width:260px">Navigator</div>
<svg class="a" style="left:1627px;top:107px" width="18" height="18" viewBox="0 0 18 18" fill="none" stroke="#222"><circle cx="7" cy="7" r="4.500" stroke-width="1.200" fill="#f6f6f6"/><path d="M10.500 10.500l5 5" stroke-width="2"/><path d="M4.500 7h5M7 4.500v5" stroke-width="1"/></svg>
<svg class="a" style="left:1654px;top:107px" width="18" height="18" viewBox="0 0 18 18" fill="none" stroke="#222"><circle cx="7" cy="7" r="4.500" stroke-width="1.200" fill="#f6f6f6"/><path d="M10.500 10.500l5 5" stroke-width="2"/><path d="M4.500 7h5" stroke-width="1"/></svg>
<svg class="a" style="left:1681px;top:107px" width="18" height="18" viewBox="0 0 18 18" fill="none" stroke="#888"><circle cx="7" cy="7" r="4.500" stroke-width="1.200" fill="#f6f6f6"/><path d="M10.500 10.500l5 5" stroke-width="2"/></svg>
<div class="vsep" style="left:1706px;top:105px;height:20px"></div>
<svg class="a" style="left:1713px;top:107px" width="18" height="18" viewBox="0 0 18 18" fill="none" stroke="#3a3a3a" stroke-width="2"><path d="M12.800 5.800A5 5 0 1 0 7.300 13.700"/><path d="M11 15.200L5.800 17 7.800 10.500z" fill="#3a3a3a" stroke="none"/></svg>
<svg class="a" style="left:1741px;top:107px" width="18" height="18" viewBox="0 0 18 18" fill="none" stroke="#aaa" stroke-width="1.200"><path d="M9 1v4M9 13v4M1 9h4M13 9h4M3.300 3.300l2.800 2.800M11.900 11.900l2.800 2.800M14.700 3.300l-2.800 2.800M6.100 11.900l-2.800 2.800M5.900 1.600l1.500 3.700M10.600 12.700l1.500 3.700M12.100 1.600l-1.500 3.700M7.400 12.700l-1.500 3.700M1.600 5.900l3.700 1.500M12.700 10.600l3.700 1.500M1.600 12.100l3.700-1.500M12.700 7.400l3.700-1.500"/></svg>
<svg class="a" style="left:1768px;top:107px" width="18" height="18" viewBox="0 0 18 18" fill="none" stroke="#3a3a3a" stroke-width="2"><path d="M5.200 5.800A5 5 0 1 1 10.700 13.700"/><path d="M7 15.200L12.200 17 10.200 10.500z" fill="#3a3a3a" stroke="none"/></svg>
<div class="vsep" style="left:1793px;top:105px;height:20px"></div>
<svg class="a" style="left:1800px;top:105px" width="20" height="20" viewBox="0 0 20 20" fill="none" stroke="#333" stroke-width="1"><path d="M2.500 9.500v8l6-4z" stroke-dasharray="1.500 1"/><path d="M10.500 8v11" stroke-width="1.300"/><path d="M18 9.500v8l-6-4z" fill="#333"/><path d="M6 5c2-3 7-3 9 0" stroke-width="1.500"/><path d="M16.500 2v4.500h-4.500z" fill="#333" stroke="none"/></svg>
<div class="a" style="left:1621px;top:130px;width:260px;height:186px;background:#a0a0a0;overflow:hidden">
<svg class="a" style="left:0;top:0" width="260" height="186" viewBox="1621 130 260 186">
<rect x="1701" y="130" width="139" height="186" fill="#fff"/>
<g transform="translate(1701 130) scale(0.1379) translate(-577 -140)"><use href="#sw"/><use href="#rabbit"/></g>
<g fill="#335b1c" stroke="#24400f" stroke-width="0.600" stroke-linejoin="round">
<path d="M1701 251c2-1.500 4-1 5 0 2-1.500 4-1 5 0 2-1 4-.500 5 0 3 1 5 3 7 6 3 2 6 4 8 7 2 3 2 6 1 9l4 14v29h-35z"/>
<path d="M1794 281c1-4 3-8 7-10 3-3 8-4 12-3.500 4-1.500 8-1.500 12-1 5-1 10-.500 15 1v49h-46z"/>
<path d="M1724 292c1-6 4-12 8-16 3-2 7-2 10-1.400 3-1 6-.6 9 .6 5-1 10 0 14 1.200 5 1 10 3 14.500 5.900 5 0 10-1 14-2.400 3 2 6 5 7 8 2 9 2 18 0 28h-77c-2-8-2-16 0-24z"/>
</g>
<path d="M1656 130v123.500h185v-123.500" fill="none" stroke="#f00" stroke-width="2"/>
</svg></div>
<!-- layer panel -->
<div class="ptitle" style="left:1621px;top:321px;width:260px">Layer</div>
<div class="t" style="left:1626px;top:350px;font-size:11px">Opacity</div>
<div class="a" style="left:1702px;top:348px;width:180px;height:16px;background:linear-gradient(90deg,#d4e9f8,#7fc1f5 160px);border:1px solid #7a7a7a"></div>
<div class="t" style="left:1626px;top:374px;font-size:11px">Blending</div>
<div class="a" style="left:1703px;top:370px;width:180px;height:20px;background:#e1e1e1;border:1px solid #adadad"></div>
<div class="t" style="left:1706px;top:374px;font-size:11px">Normal</div>
<div class="cb" style="left:1627px;top:398px"></div><div class="t" style="left:1644px;top:398px;font-size:11px">Protect Alpha</div>
<div class="cb" style="left:1725px;top:398px"></div><div class="t" style="left:1742px;top:398px;font-size:11px">Clipping</div>
<div class="cb" style="left:1822px;top:398px"></div><div class="t" style="left:1839px;top:398px;font-size:11px">Lock</div>
<div class="a" style="left:1623px;top:417px;width:260px;height:457px;background:#fff;border-left:1px solid #222;overflow:hidden">
<div class="a" style="left:18px;top:0;width:1px;height:457px;background:#222"></div>
<div class="a" style="left:19px;top:-5px;width:241px;height:40px;"></div>
<div class="a" style="left:0;top:35px;width:260px;height:1px;background:#222"></div>
<div class="a checker" style="left:38px;top:-2px;width:28px;height:35px;border:1px solid #8a8a8a"></div>
<div class="t" style="left:85px;top:9px;font-size:12.500px;">Right Ear New Color</div>
<div class="a" style="left:19px;top:35px;width:241px;height:40px;"></div>
<div class="a" style="left:0;top:75px;width:260px;height:1px;background:#222"></div>
<div class="a checker" style="left:38px;top:38px;width:28px;height:35px;border:1px solid #8a8a8a"></div>
<div class="t" style="left:85px;top:49px;font-size:12.500px;">Right Ear Flop New</div>
<div class="a" style="left:19px;top:75px;width:241px;height:40px;"></div>
<div class="a" style="left:0;top:115px;width:260px;height:1px;background:#222"></div>
<div class="a checker" style="left:38px;top:78px;width:28px;height:35px;border:1px solid #8a8a8a"></div>
<div class="t" style="left:85px;top:89px;font-size:12.500px;">Right Ear Flop Color</div>
<div class="a" style="left:19px;top:115px;width:241px;height:40px;"></div>
<div class="a" style="left:0;top:155px;width:260px;height:1px;background:#222"></div>
<div class="a checker" style="left:38px;top:118px;width:28px;height:35px;border:1px solid #8a8a8a"></div>
<div class="t" style="left:85px;top:129px;font-size:12.500px;">New Head</div>
<div class="a" style="left:19px;top:155px;width:241px;height:40px;background:#c5e2f8;"></div>
<div class="a" style="left:0;top:195px;width:260px;height:1px;background:#222"></div>
<div class="a checker" style="left:38px;top:158px;width:28px;height:35px;border:1px solid #8a8a8a"></div>
<div class="t" style="left:85px;top:169px;font-size:12.500px;letter-spacing:.35px;font-weight:bold;">Left Ear New</div>
<div class="a" style="left:19px;top:195px;width:241px;height:40px;"></div>
<div class="a" style="left:0;top:235px;width:260px;height:1px;background:#222"></div>
<div class="a checker" style="left:38px;top:198px;width:28px;height:35px;border:1px solid #8a8a8a"></div>
<div class="t" style="left:85px;top:209px;font-size:12.500px;">Left Ear New Color</div>
<div class="a" style="left:19px;top:235px;width:241px;height:40px;"></div>
<div class="a" style="left:0;top:275px;width:260px;height:1px;background:#222"></div>
<div class="a checker" style="left:38px;top:238px;width:28px;height:35px;border:1px solid #8a8a8a"></div>
<div class="t" style="left:85px;top:249px;font-size:12.500px;">Head</div>
<div class="a" style="left:5px;top:250px;width:9px;height:9px;border-radius:50%;background:#c8c8c8;border:2px solid #b4b4b4"></div>
<div class="a" style="left:19px;top:275px;width:241px;height:40px;"></div>
<div class="a" style="left:0;top:315px;width:260px;height:1px;background:#222"></div>
<div class="a checker" style="left:38px;top:278px;width:28px;height:35px;border:1px solid #8a8a8a"></div>
<div class="t" style="left:85px;top:289px;font-size:12.500px;">Right Ear</div>
<div class="a" style="left:5px;top:290px;width:9px;height:9px;border-radius:50%;background:#c8c8c8;border:2px solid #b4b4b4"></div>
<div class="a" style="left:19px;top:315px;width:241px;height:40px;"></div>
<div class="a" style="left:0;top:355px;width:260px;height:1px;background:#222"></div>
<div class="a checker" style="left:38px;top:318px;width:28px;height:35px;border:1px solid #8a8a8a"></div>
<div class="t" style="left:85px;top:329px;font-size:12.500px;">Left Ear</div>
<div class="a" style="left:5px;top:330px;width:9px;height:9px;border-radius:50%;background:#c8c8c8;border:2px solid #b4b4b4"></div>
<div class="a" style="left:19px;top:355px;width:241px;height:40px;"></div>
<div class="a" style="left:0;top:395px;width:260px;height:1px;background:#222"></div>
<div class="a checker" style="left:38px;top:358px;width:28px;height:35px;border:1px solid #8a8a8a"></div>
<div class="t" style="left:85px;top:369px;font-size:12.500px;">Neck</div>
<div class="a" style="left:19px;top:395px;width:241px;height:40px;"></div>
<div class="a" style="left:0;top:435px;width:260px;height:1px;background:#222"></div>
<div class="a checker" style="left:38px;top:398px;width:28px;height:35px;border:1px solid #8a8a8a"></div>
<div class="t" style="left:85px;top:409px;font-size:12.500px;">Left Ear Flop New</div>
<div class="a" style="left:19px;top:435px;width:241px;height:40px;"></div>
<div class="a" style="left:0;top:475px;width:260px;height:1px;background:#222"></div>
<div class="a checker" style="left:38px;top:438px;width:28px;height:35px;border:1px solid #8a8a8a"></div>
<div class="t" style="left:85px;top:449px;font-size:12.500px;">Left Ear Flop Color</div>
<div class="a" style="left:53.2px;top:6.0px;width:1.5px;height:4px;background:#e8506e;border-radius:40%;transform:rotate(-20deg)"></div><div class="a" style="left:53.8px;top:52.0px;width:2px;height:2px;background:#b0b0b0;border-radius:40%;transform:rotate(-20deg)"></div><div class="a" style="left:53.8px;top:91.7px;width:2px;height:2px;background:#f0a8b4;border-radius:40%;transform:rotate(-20deg)"></div><div class="a" style="left:53.3px;top:129.3px;width:5px;height:5px;background:transparent;border:1px solid #a8a8a8;border-radius:45%;transform:rotate(-20deg)"></div><div class="a" style="left:52.9px;top:166.5px;width:1px;height:3px;background:#d8d8d8;border-radius:40%;transform:rotate(-20deg)"></div><div class="a" style="left:52.7px;top:207.0px;width:1.5px;height:2px;background:#f0c8b4;border-radius:40%;transform:rotate(-20deg)"></div><div class="a" style="left:53.6px;top:249.0px;width:5px;height:5px;background:transparent;border:1px solid #a8a8a8;border-radius:45%;transform:rotate(-20deg)"></div><div class="a" style="left:49.4px;top:284.5px;width:5px;height:6px;background:transparent;border:1px solid #a8a8a8;border-radius:45%;transform:rotate(-20deg)"></div><div class="a" style="left:53.8px;top:323.5px;width:2px;height:4px;background:#c8c8c8;border-radius:40%;transform:rotate(-20deg)"></div><div class="a" style="left:52.7px;top:372.0px;width:1.5px;height:1.5px;background:#c0c0c0;border-radius:40%;transform:rotate(-20deg)"></div></div>
<svg class="a" style="left:1628px;top:879px" width="18" height="18" viewBox="0 0 18 18" fill="#fff" stroke="#555"><path d="M3.500 2.500h7l4 4v9h-11z"/><path d="M10.500 2.500v4h4" fill="#ddd"/></svg>
<!-- brush size panel -->
<div class="ptitle" style="left:1621px;top:911px;width:260px">Brush Size</div>
<div class="a" style="left:1622px;top:932px;width:38px;height:24px;background:#fff"></div>
<div class="a" style="left:1622px;top:958px;width:38px;height:48px;background:#fff"></div>
<div class="a" style="left:1622px;top:1008px;width:38px;height:48px;background:#fff"></div>
<div class="a" style="left:1662px;top:932px;width:38px;height:24px;background:#fff"></div>
<div class="a" style="left:1662px;top:958px;width:38px;height:48px;background:#fff"></div>
<div class="a" style="left:1662px;top:1008px;width:38px;height:48px;background:#fff"></div>
<div class="a" style="left:1702px;top:932px;width:38px;height:24px;background:#fff"></div>
<div class="a" style="left:1702px;top:958px;width:38px;height:48px;background:#fff"></div>
<div class="a" style="left:1702px;top:1008px;width:38px;height:48px;background:#fff"></div>
<div class="a" style="left:1742px;top:932px;width:38px;height:24px;background:#fff"></div>
<div class="a" style="left:1742px;top:958px;width:38px;height:48px;background:#fff"></div>
<div class="a" style="left:1742px;top:1008px;width:38px;height:48px;background:#fff"></div>
<div class="a" style="left:1782px;top:932px;width:38px;height:24px;background:#fff"></div>
<div class="a" style="left:1782px;top:958px;width:38px;height:48px;background:#fff"></div>
<div class="a" style="left:1782px;top:1008px;width:38px;height:48px;background:#fff"></div>
<div class="a" style="left:1822px;top:932px;width:38px;height:24px;background:#fff"></div>
<div class="a" style="left:1822px;top:958px;width:38px;height:48px;background:#fff"></div>
<div class="a" style="left:1822px;top:1008px;width:38px;height:48px;background:#fff"></div>
<div class="a" style="left:1622px;top:1058px;width:38px;height:2px;background:#fff"></div><div class="a" style="left:1662px;top:1058px;width:38px;height:2px;background:#fff"></div><div class="a" style="left:1702px;top:1058px;width:38px;height:2px;background:#fff"></div><div class="a" style="left:1742px;top:1058px;width:38px;height:2px;background:#fff"></div><div class="a" style="left:1782px;top:1058px;width:38px;height:2px;background:#fff"></div><div class="a" style="left:1822px;top:1058px;width:38px;height:2px;background:#fff"></div>
<div class="t" style="left:1622px;top:944px;width:38px;text-align:center;font-size:9.500px;letter-spacing:-.2px">0.5</div>
<div class="a" style="left:1639px;top:975px;width:4px;height:4px;border-radius:50%;background:#111"></div>
<div class="t" style="left:1622px;top:994px;width:38px;text-align:center;font-size:9.500px;letter-spacing:-.2px">4</div>
<div class="a" style="left:1631px;top:1017px;width:20px;height:20px;border-radius:50%;background:#1e1e1e"></div>
<div class="t" style="left:1622px;top:1044px;width:38px;text-align:center;font-size:9.500px;letter-spacing:-.2px">20</div>
<div class="a" style="left:1668.5px;top:1014.5px;width:25.0px;height:25.0px;border-radius:50%;background:#1e1e1e"></div>
<div class="t" style="left:1662px;top:1044px;width:38px;text-align:center;font-size:9.500px;letter-spacing:-.2px">25</div>
<div class="a" style="left:1707px;top:1013px;width:28px;height:28px;border-radius:50%;background:#1e1e1e"></div>
<div class="t" style="left:1702px;top:1044px;width:38px;text-align:center;font-size:9.500px;letter-spacing:-.2px">30</div>
<div class="a" style="left:1747px;top:1013px;width:28px;height:28px;border-radius:50%;background:#1e1e1e"></div>
<div class="t" style="left:1742px;top:1044px;width:38px;text-align:center;font-size:9.500px;letter-spacing:-.2px">40</div>
<div class="a" style="left:1787px;top:1013px;width:28px;height:28px;border-radius:50%;background:#1e1e1e"></div>
<div class="t" style="left:1782px;top:1044px;width:38px;text-align:center;font-size:9.500px;letter-spacing:-.2px">50</div>
<div class="a" style="left:1827px;top:1013px;width:28px;height:28px;border-radius:50%;background:#1e1e1e"></div>
<div class="t" style="left:1822px;top:1044px;width:38px;text-align:center;font-size:9.500px;letter-spacing:-.2px">70</div>
</div>
<!-- tray popup -->
<div class="a" style="left:1657px;top:862px;width:201px;height:160px;background:#31c9c9;box-shadow:0 0 3px rgba(0,0,0,.35)">
<svg class="a" style="left:11px;top:10px" width="20" height="20" viewBox="0 0 20 20"><rect x="2" y="2" width="16" height="16" rx="4" fill="#fff"/><path d="M6 13a2.500 2.500 0 0 1 .5-5 3.500 3.500 0 0 1 6.500 1 2 2 0 0 1 0 4z" fill="#3d9cf0"/></svg>
<svg class="a" style="left:51px;top:10px" width="20" height="20" viewBox="0 0 20 20"><path d="M12 1c-.800 1.200-1.200 2.200-1.100 3a6 6 0 0 1 4.900 6 6 6 0 0 1-5 5.900c-1.200.800-2.500 1.900-2.800 3.100.800-1.200 1.200-2.200 1.100-3A6 6 0 0 1 4.200 10a6 6 0 0 1 5-5.900C10.400 3.300 11.700 2.200 12 1z" fill="#f0582a"/><circle cx="10" cy="10" r="2.500" fill="#31c9c9"/></svg>
<svg class="a" style="left:91px;top:10px" width="20" height="20" viewBox="0 0 20 20"><circle cx="10" cy="10" r="8" fill="#13294a"/><circle cx="12.500" cy="7.500" r="2.800" fill="none" stroke="#fff" stroke-width="1.400"/><path d="M2 11l6 2.500 3-3.500" fill="none" stroke="#fff" stroke-width="2.400"/></svg>
<svg class="a" style="left:131px;top:10px" width="20" height="20" viewBox="0 0 20 20"><rect x="5.500" y="7.500" width="7" height="10" rx="1" fill="none" stroke="#fff" stroke-width="1.200"/><rect x="6.500" y="2.500" width="5" height="5" fill="none" stroke="#fff" stroke-width="1.200"/><path d="M12 15l2 2 3.500-4" fill="none" stroke="#fff" stroke-width="1.200"/></svg>
<svg class="a" style="left:171px;top:10px" width="20" height="20" viewBox="0 0 20 20"><path d="M2 7c0-3 1-5 3-5l5 6 5-6c2 0 3 2 3 5 0 6-3 10-5 11l1-5-4 3-4-3 1 5C5 17 2 13 2 7z" fill="#1c52a8"/></svg>
<svg class="a" style="left:11px;top:50px" width="20" height="20" viewBox="0 0 20 20"><rect x="2" y="2" width="16" height="16" rx="2" fill="#f0821e"/><path d="M5 14h10M6 11c2 1 6 1 8 0M8 8c1-2 3-2 3-4M11 9c1-1 2-2 2-3" fill="none" stroke="#fff" stroke-width="1.300"/></svg>
<svg class="a" style="left:51px;top:50px" width="20" height="20" viewBox="0 0 20 20"><path d="M13.500 3.500a7 7 0 1 0 0 13" fill="none" stroke="#00b8f0" stroke-width="3"/><path d="M10 9h7.500v3h-3v4.500h-3V12H10z" fill="#00b8f0"/></svg>
<svg class="a" style="left:91px;top:50px" width="20" height="20" viewBox="0 0 20 20"><rect x="2.500" y="3" width="15" height="12" fill="none" stroke="#fff" stroke-width="1.400"/><circle cx="10" cy="9" r="2.500" fill="none" stroke="#13294a" stroke-width="2.500"/><rect x="4" y="4.500" width="12" height="9" fill="none" stroke="#13294a" stroke-width="1"/><path d="M7 18h6" stroke="#fff" stroke-width="1.400"/></svg>
<svg class="a" style="left:131px;top:50px" width="20" height="20" viewBox="0 0 20 20"><path d="M10 2c2 2 5 2 7 2 0 7-2 12-7 14C5 16 3 11 3 4c2 0 5 0 7-2z" fill="#fff" stroke="#111" stroke-width="1.200"/><path d="M10 3v14M4 9h13" stroke="#111" stroke-width="1.500"/><circle cx="14.500" cy="14.500" r="3.800" fill="#1e9632"/><path d="M12.800 14.500l1.300 1.300 2.200-2.400" fill="none" stroke="#fff" stroke-width="1"/></svg>
<svg class="a" style="left:171px;top:50px" width="20" height="20" viewBox="0 0 20 20"><path d="M16 6a7 7 0 1 0 0 9l-3-2a3.500 3.500 0 1 1 0-5z" fill="#e23a28"/><path d="M4 16l6-8 2 1.500-4 8z" fill="#e8b060"/><path d="M11 6l4-5" stroke="#2a64c8" stroke-width="2"/></svg>
<svg class="a" style="left:11px;top:90px" width="20" height="20" viewBox="0 0 20 20"><circle cx="10" cy="10" r="8" fill="#e01420"/><path d="M5.500 13.500v-7l4.500 4.500 4.500-4.500v7" fill="none" stroke="#fff" stroke-width="2"/></svg>
<svg class="a" style="left:51px;top:90px" width="20" height="20" viewBox="0 0 20 20"><rect x="2" y="2" width="16" height="16" rx="1" fill="#222"/><path d="M4 10c2-4 8-5 11-2-1 4-7 6-11 2z" fill="none" stroke="#76b900" stroke-width="1.600"/><circle cx="9" cy="10" r="1.800" fill="#76b900"/><rect x="14.500" y="5" width="2.500" height="10" fill="#f5d800"/></svg>
<svg class="a" style="left:91px;top:90px" width="20" height="20" viewBox="0 0 20 20"><path d="M2 2h16v16H2z" fill="#9fe3e3"/><path d="M2 2h16L9 11l-3-4zM9 18l9-9v9z" fill="#e6fafa"/></svg>
<svg class="a" style="left:131px;top:90px" width="20" height="20" viewBox="0 0 20 20"><ellipse cx="10" cy="10" rx="6" ry="8.500" fill="#0a78e6"/><path d="M7 6.500l6 6-3 3v-11l3 3-6 6" fill="none" stroke="#fff" stroke-width="1.200"/></svg>
<svg class="a" style="left:171px;top:90px" width="20" height="20" viewBox="0 0 20 20"><path d="M4 6c3-2 9-2 12 0 2 3 2.500 6 2 10-1 1-3 2-4 2l-1-2H7l-1 2c-1 0-3-1-4-2-.5-4 0-7 2-10z" fill="#f4f6ff"/><circle cx="7.500" cy="11" r="1.500" fill="#31c9c9"/><circle cx="12.500" cy="11" r="1.500" fill="#31c9c9"/><circle cx="16" cy="4" r="3" fill="#f04747"/></svg>
<svg class="a" style="left:11px;top:130px" width="20" height="20" viewBox="0 0 20 20"><circle cx="10" cy="10" r="8" fill="#08a8f0"/><path d="M11.500 3l-5 8h3l-1.500 6 5.500-8.500h-3z" fill="#31c9c9"/></svg>
<svg class="a" style="left:51px;top:130px" width="20" height="20" viewBox="0 0 20 20"><circle cx="8" cy="7" r="5.500" fill="#0a9bf0"/><circle cx="12" cy="13" r="5.500" fill="#0a9bf0"/><circle cx="10" cy="10" r="6.500" fill="#1ea8f5"/><text x="6.300" y="14.300" font-family="Liberation Sans, sans-serif" font-weight="bold" font-size="12" fill="#fff">S</text></svg>
<svg class="a" style="left:91px;top:130px" width="20" height="20" viewBox="0 0 20 20"><rect x="2" y="2" width="16" height="16" fill="#262626"/><text x="7" y="15" font-family="Liberation Sans, sans-serif" font-weight="bold" font-size="12" fill="#fff">B</text><rect x="4" y="5" width="2.500" height="2.500" fill="#fff"/></svg>
</div>
<!-- taskbar -->
<div class="a" style="left:1858px;top:0;width:62px;height:1080px;background:linear-gradient(180deg,rgba(255,255,255,.04) 0%,rgba(0,0,0,0) 30%,rgba(0,0,0,.03) 100%),linear-gradient(90deg,#2e8b88 0%,#34918e 50%,#399693 100%)">
<svg class="a" style="left:21px;top:5px" width="20" height="20" viewBox="0 0 24 24"><path d="M3 5.500l7.500-1v7H3zM11.500 4.300L21 3v8.500h-9.500zM3 12.500h7.500v7L3 18.500zM11.500 12.500H21V21l-9.500-1.300z" fill="#fff"/></svg>
<svg class="a" style="left:21px;top:37px" width="20" height="20" viewBox="0 0 24 24"><circle cx="12" cy="12" r="10" fill="#14244a"/><path d="M2.300 14.500A10 10 0 0 0 21.700 14.500 10 10 0 0 1 2.300 14.500z" fill="#1a5f9e"/><path d="M3 17a10 10 0 0 0 18 0 14 14 0 0 1-18 0z" fill="#1c74b8"/><circle cx="15.800" cy="8.800" r="3.600" fill="#fff"/><circle cx="15.800" cy="8.800" r="2" fill="#14244a" stroke="#fff" stroke-width=".1"/><path d="M2.200 12.400l6.500 2.700 4.200-5 3 3-4.500 3.800-2 3.200-3.500-1.200z" fill="#fff"/><circle cx="8.800" cy="16.300" r="2" fill="#14244a"/></svg>
<svg class="a" style="left:21px;top:69px" width="20" height="20" viewBox="0 0 24 24"><path d="M2 5h7l2 2h11v3H2z" fill="#e8b339"/><path d="M2 8h20v12H2z" fill="#fcd666"/><path d="M7 20v-6h10v6h-3v-3h-4v3z" fill="#3aa0e8"/></svg>
<svg class="a" style="left:21px;top:100px" width="20" height="20" viewBox="0 0 24 24"><circle cx="12" cy="12" r="10" fill="#e94335"/><path d="M12 12L3.400 7A10 10 0 0 0 12 22z" fill="#34a853"/><path d="M12 12l5 8.600A10 10 0 0 0 22 12z" fill="#fbbc05"/><path d="M12 12h10a10 10 0 0 1-5 8.600z" fill="#fbbc05"/><circle cx="12" cy="12" r="4.600" fill="#fff"/><circle cx="12" cy="12" r="3.600" fill="#4285f4"/></svg>
<svg class="a" style="left:21px;top:131px" width="20" height="20" viewBox="0 0 24 24"><rect x="2" y="2" width="20" height="17" rx="2.500" fill="#7b8ce0"/><path d="M14 19l5 4v-5z" fill="#7b8ce0"/><path d="M6.500 8c3-1.500 8-1.500 11 0 1.500 2.500 2 5 1.500 7.500-1 .800-2 1.200-3 1.300l-.8-1.300h-6.400l-.8 1.300c-1-.1-2-.5-3-1.300C4.500 13 5 10.500 6.500 8z" fill="#fff"/><circle cx="9.500" cy="12.500" r="1.400" fill="#7b8ce0"/><circle cx="14.500" cy="12.500" r="1.400" fill="#7b8ce0"/></svg>
<svg class="a" style="left:21px;top:162px" width="20" height="20" viewBox="0 0 24 24"><circle cx="12" cy="12" r="10" fill="#ff9a1e"/><path d="M12 2a10 10 0 0 1 9.500 13c-1 3.500-4.500 7-9.500 7 6-2 7-8 4-11-1-2-3-2-5-1 2-3 0-6 1-8z" fill="#e8312a"/><circle cx="13" cy="13" r="5" fill="#5a3fc8"/><path d="M6 5c1 3 4 4 7 4 2 0 4 2 3 5-1 2-4 3-6 2 2 0 3-2 2-3-3 0-7-2-6-8z" fill="#ffd23c"/></svg>
<svg class="a" style="left:21px;top:193px" width="20" height="20" viewBox="0 0 24 24"><circle cx="12" cy="12" r="10" fill="#1ed760"/><path d="M6 9c4-1.500 9-1 13 1M7 12.500c3.500-1 7.500-.700 10.500 1M8 16c2.500-.800 5.500-.500 8 .800" fill="none" stroke="#111" stroke-width="2" stroke-linecap="round"/></svg>
<svg class="a" style="left:21px;top:224px" width="20" height="20" viewBox="0 0 24 24"><path d="M7 2l2 4h5l2-4 1 7c1.500 3 1.500 8 0 13H8C6 17 6 12 7 9z" fill="#fff"/><path d="M10 10h1.500M13 10h1.500" stroke="#333" stroke-width="1"/><path d="M9.500 14l2.500 1 2.500-1v3l-2.500-1-2.500 1z" fill="#e07a2a"/></svg>
<svg class="a" style="left:21px;top:255px" width="20" height="20" viewBox="0 0 24 24"><path d="M14.500 1.500c-1 1.500-1.500 2.600-1.400 3.600a7 7 0 0 1 5.800 6.900 7 7 0 0 1-6 7c-1.500 1-3 2.300-3.400 3.500 1-1.500 1.500-2.600 1.400-3.600A7 7 0 0 1 5.100 12a7 7 0 0 1 6-7c1.500-1 3-2.300 3.400-3.500z" fill="#f0582a"/><circle cx="12" cy="12" r="2.900" fill="#2f8e8b"/></svg>
<svg class="a" style="left:21px;top:286px" width="20" height="20" viewBox="0 0 24 24"><circle cx="12" cy="12" r="10" fill="#14244a"/><path d="M2.300 14.500A10 10 0 0 0 21.700 14.500 10 10 0 0 1 2.300 14.500z" fill="#1a5f9e"/><path d="M3 17a10 10 0 0 0 18 0 14 14 0 0 1-18 0z" fill="#1c74b8"/><circle cx="15.800" cy="8.800" r="3.600" fill="#fff"/><circle cx="15.800" cy="8.800" r="2" fill="#14244a" stroke="#fff" stroke-width=".1"/><path d="M2.200 12.400l6.500 2.700 4.200-5 3 3-4.500 3.800-2 3.200-3.500-1.200z" fill="#fff"/><circle cx="8.800" cy="16.300" r="2" fill="#14244a"/></svg>
<div class="a" style="left:60px;top:131px;width:2px;height:20px;background:#a8f4f4"></div>
<div class="a" style="left:56px;top:161px;width:3px;height:22px;background:rgba(200,240,240,.55)"></div>
<div class="a" style="left:60px;top:224px;width:2px;height:20px;background:#a8f4f4"></div>
<div class="a" style="left:60px;top:255px;width:2px;height:20px;background:#a8f4f4"></div>
<div class="a" style="left:60px;top:286px;width:2px;height:20px;background:#a8f4f4"></div>
<svg class="a" style="left:11px;top:935px" width="12" height="14" viewBox="0 0 12 14"><path d="M9 1.500L3 7l6 5.500" fill="none" stroke="#fff" stroke-width="1.300"/></svg>
<svg class="a" style="left:9px;top:957px" width="18" height="18" viewBox="0 0 18 18" fill="none" stroke="#fff" stroke-width="1.200"><path d="M3 15a12 12 0 0 1 12-12" opacity=".9"/><path d="M6.500 15a8.500 8.500 0 0 1 8.500-8.500"/><path d="M10 15a5 5 0 0 1 5-5"/><circle cx="14" cy="14.500" r="1.500" fill="#fff" stroke="none"/></svg>
<svg class="a" style="left:31px;top:957px" width="20" height="18" viewBox="0 0 20 18" fill="none" stroke="#fff" stroke-width="1.200"><path d="M2.500 6.500h3l4-3.500v12l-4-3.500h-3z"/><path d="M11.500 6.500c1 1.500 1 3.500 0 5M13.500 4.500c2 2.500 2 6.500 0 9"/><path d="M16 3c2.500 3.500 2.500 8.500 0 12" opacity=".45"/></svg>
<div class="t" style="left:0;top:992px;width:62px;text-align:center;font-size:12px;color:#fff;letter-spacing:-.3px">10:08 PM</div>
<div class="t" style="left:0;top:1009px;width:62px;text-align:center;font-size:12px;color:#fff;letter-spacing:-.3px">6/16/2019</div>
<svg class="a" style="left:22px;top:1042px" width="18" height="17" viewBox="0 0 18 17"><path d="M1.500 1.500h15v10.500h-5.500l-2 3-2-3h-5.500z" fill="none" stroke="#fff" stroke-width="1.300"/></svg>
<div class="a" style="left:0;top:1075px;width:62px;height:1px;background:rgba(255,255,255,.35)"></div>
</div>
</body>
</html>
